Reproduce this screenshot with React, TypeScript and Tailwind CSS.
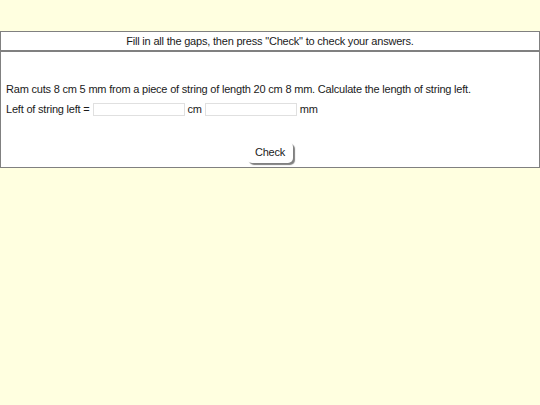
export default function App() {
  return (
    <div className="min-h-[405px] w-[540px] bg-[#ffffe0] pt-[31px] text-[11px] tracking-[-0.2px] text-[#1a1a1a]" style={{ fontFamily: '"Liberation Sans", Arial, sans-serif' }}>
      <div className="border border-[#808080] bg-white">
        <div className="flex h-[20px] items-center justify-center border-b-2 border-[#808080]">
          Fill in all the gaps, then press "Check" to check your answers.
        </div>
        <div className="px-[5px] pt-[30px]">
          <div className="leading-[14px]">Ram cuts 8 cm 5 mm from a piece of string of length 20 cm 8 mm. Calculate the length of string left.</div>
          <div className="mt-[6px] flex items-center leading-[14px]">
            <span>Left of string left =</span>
            <input className="ml-[3px] h-[13px] w-[92px] border border-[#e0e0e0] bg-white outline-none" />
            <span className="ml-[3px]">cm</span>
            <input className="ml-[3px] h-[13px] w-[92px] border border-[#e0e0e0] bg-white outline-none" />
            <span className="ml-[3px]">mm</span>
          </div>
          <div className="flex justify-center pb-[4px] pt-[26px]">
            <button className="h-[21px] rounded-[5px] bg-white px-[8px] text-[11px] tracking-[-0.2px] shadow-[2px_2px_1px_#808080]">Check</button>
          </div>
        </div>
      </div>
    </div>
  );
}
